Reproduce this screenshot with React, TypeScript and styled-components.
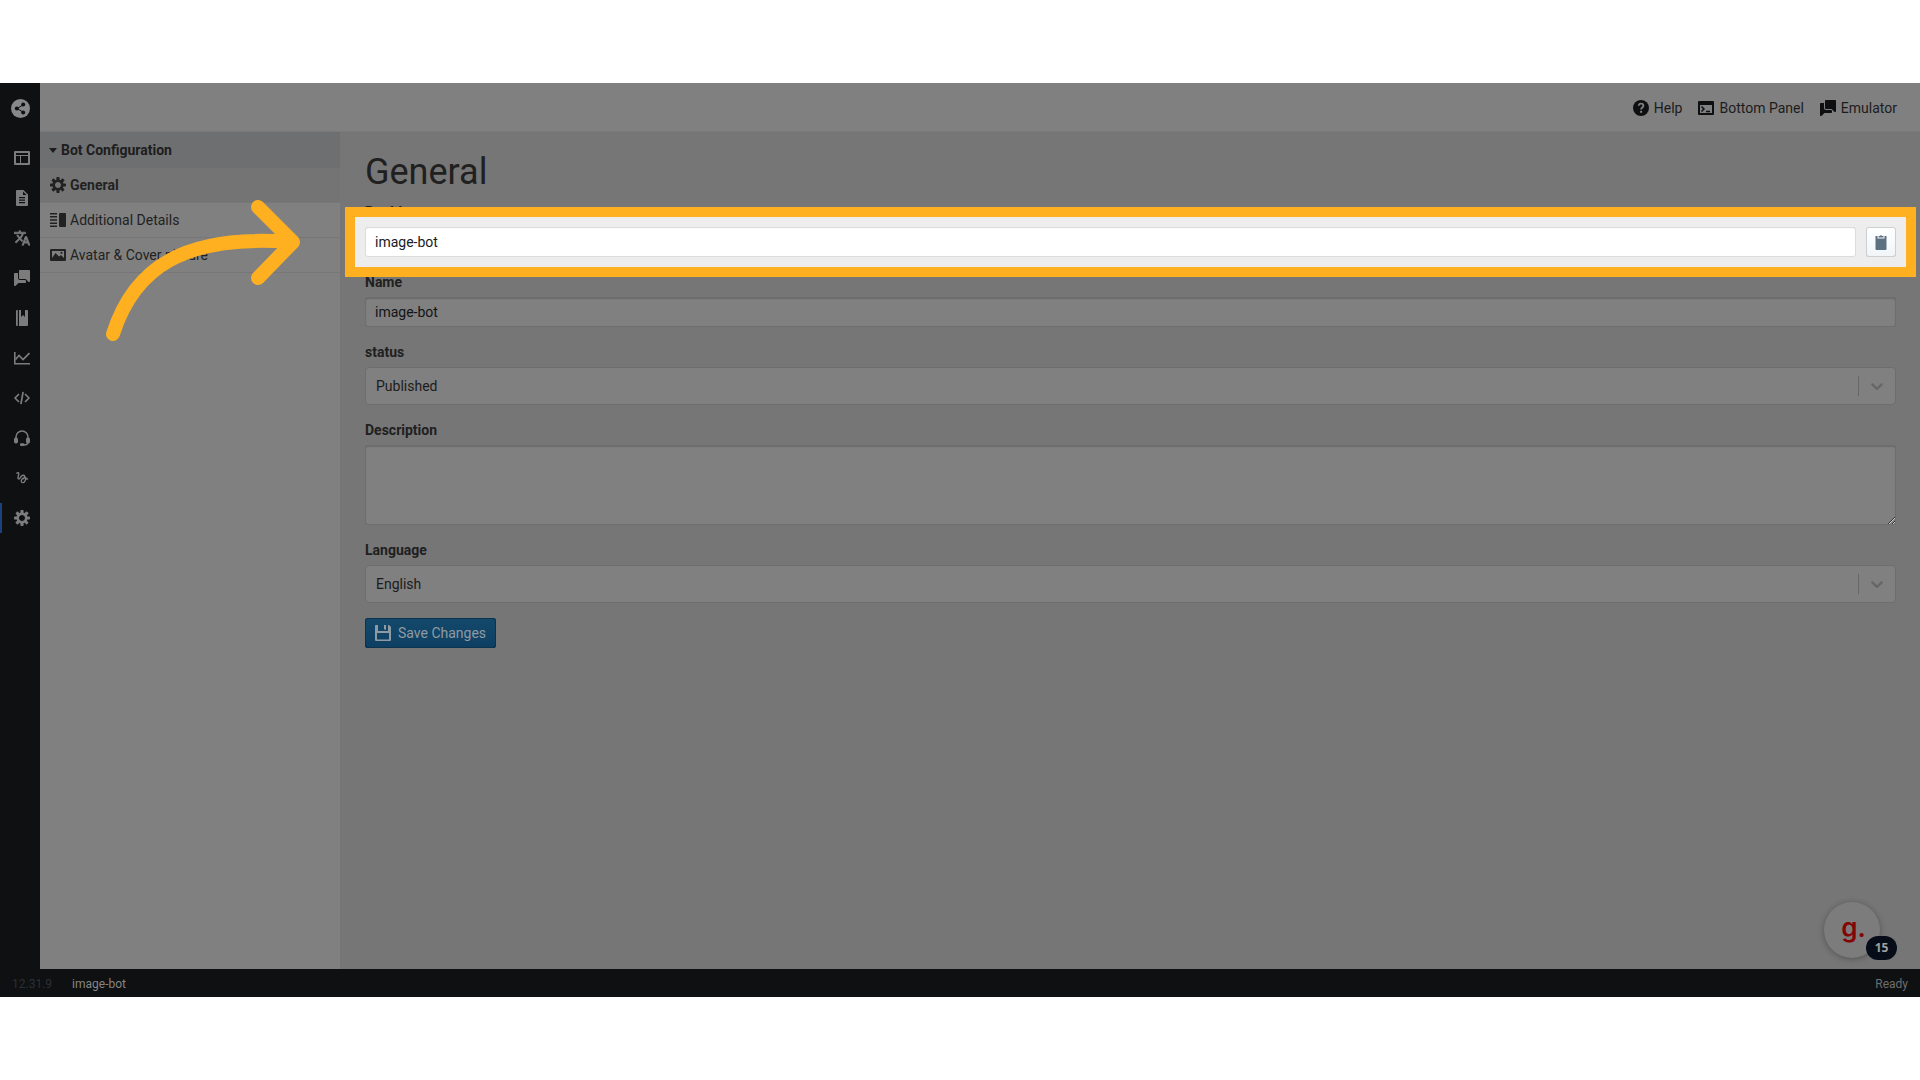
import React from "react";
import styled, { createGlobalStyle } from "styled-components";
import { MdTranslate } from "react-icons/md";

const GlobalStyle = createGlobalStyle`
  *, *::before, *::after { box-sizing: border-box; }
  body {
    margin: 0;
    background: #ffffff;
    color: #202020;
    font: 14px/20px Roboto, "Liberation Sans", sans-serif;
  }
  button, input, select, textarea { font: inherit; margin: 0; }
`;

const Page = styled.div`
  height: 100vh;
  min-height: 700px;
  padding: 83px 0;
`;

const Shell = styled.div`
  position: relative;
  display: flex;
  flex-direction: column;
  height: 100%;
  background: #767676;
`;

const Body = styled.div`
  display: flex;
  flex: 1;
  min-height: 0;
`;

const Rail = styled.nav`
  display: flex;
  flex-direction: column;
  flex: none;
  width: 40px;
  background: #0e1012;
`;

const Logo = styled.a`
  display: flex;
  align-items: center;
  justify-content: center;
  height: 55px;
  padding-bottom: 4px;
  color: #888888;
`;

const RailLink = styled.a<{ $active?: boolean }>`
  display: flex;
  align-items: center;
  height: 40px;
  padding-left: 14px;
  color: #7c7c7c;
  background: ${(p) => (p.$active ? "linear-gradient(#1b417e, #1b417e) left center / 2px 30px no-repeat" : "none")};
`;

const Workspace = styled.div`
  display: flex;
  flex: 1;
  flex-direction: column;
  min-width: 0;
`;

const TopBar = styled.header`
  display: flex;
  align-items: center;
  justify-content: flex-end;
  gap: 16px;
  flex: none;
  height: 49px;
  padding: 2px 23px 0 20px;
  background: #808080;
  border-bottom: 1px solid #7a7a7a;
`;

const TopButton = styled.button`
  display: flex;
  align-items: center;
  gap: 5px;
  padding: 0;
  border: 0;
  background: none;
  color: #1c1c1c;

  svg { color: #0d0f11; }
`;

const Columns = styled.div`
  display: flex;
  flex: 1;
  min-height: 0;
`;

const SidePanel = styled.aside`
  flex: none;
  width: 300px;
  background: #808080;
`;

const SectionToggle = styled.button`
  display: flex;
  align-items: center;
  gap: 4px;
  width: 100%;
  height: 36px;
  padding: 0 9px;
  border: 0;
  background: #6e6f71;
  color: #1d1d1d;
  font-weight: 700;
`;

const PanelLink = styled.a<{ $active?: boolean }>`
  display: flex;
  align-items: center;
  gap: 4px;
  height: 35px;
  padding: 0 10px;
  border-bottom: 1px solid #777777;
  background: ${(p) => (p.$active ? "#747474" : "transparent")};
  color: #222222;
  font-weight: ${(p) => (p.$active ? 700 : 400)};
  text-decoration: none;
`;

const Main = styled.main`
  flex: 1;
  min-width: 0;
  padding: 20px 24px 20px 25px;
`;

const Title = styled.h1`
  margin: 0 0 10px;
  font-size: 36px;
  line-height: 40px;
  font-weight: 400;
`;

const Group = styled.div`
  display: flex;
  flex-direction: column;
  gap: 5px;
  margin-bottom: 15px;
`;

const Label = styled.label`
  color: #202020;
  font-weight: 700;
`;

const TextInput = styled.input<{ $lit?: boolean }>`
  flex: 1;
  min-width: 0;
  height: 30px;
  min-height: 30px;
  padding: 0 10px;
  border: 0;
  border-radius: 3px;
  outline: 0;
  background: ${(p) => (p.$lit ? "#ffffff" : "#808080")};
  color: ${(p) => (p.$lit ? "#182026" : "#101418")};
  box-shadow: ${(p) =>
    p.$lit
      ? "inset 0 0 0 1px #dcdcdc, inset 0 1px 1px #d8d8d8"
      : "inset 0 0 0 1px #6e6e6e, inset 0 1px 1px 1px #6a6a6a"};
`;

const Spotlight = styled.div`
  position: relative;
  z-index: 1;
  display: flex;
  gap: 10px;

  &::before {
    content: "";
    position: absolute;
    inset: -20px;
    z-index: -1;
    border: 10px solid #ffb021;
    background: #ededed;
  }
`;

const CopyButton = styled.button`
  display: flex;
  align-items: center;
  justify-content: center;
  width: 30px;
  height: 30px;
  padding: 0;
  border: 0;
  border-radius: 3px;
  background: linear-gradient(#ffffff, #f1f5f8);
  box-shadow: inset 0 0 0 1px #cdd0d2, inset 0 -1px 0 #c4c8cb;
  color: #5c7080;
`;

const TextArea = styled.textarea`
  display: block;
  width: 100%;
  height: 80px;
  padding: 10px;
  border: 0;
  border-radius: 3px;
  outline: 0;
  resize: vertical;
  background: #808080;
  color: #101418;
  box-shadow: inset 0 0 0 1px #6e6e6e, inset 0 1px 1px 1px #6a6a6a;
`;

const SelectBox = styled.div`
  position: relative;
`;

const Select = styled.select`
  display: block;
  appearance: none;
  width: 100%;
  height: 38px;
  padding: 0 50px 0 10px;
  border: 1px solid #6d6d6d;
  border-radius: 4px;
  outline: 0;
  background: #808080;
  color: #1c1c1c;
`;

const Indicator = styled.span`
  position: absolute;
  top: 9px;
  right: 1px;
  display: flex;
  align-items: center;
  justify-content: center;
  width: 37px;
  height: 20px;
  border-left: 1px solid #666666;
  color: #666666;
  pointer-events: none;
`;

const SaveButton = styled.button`
  display: flex;
  align-items: center;
  gap: 7px;
  height: 30px;
  padding: 0 10px;
  border: 0;
  border-radius: 3px;
  background: linear-gradient(#14496c, #0e3f62);
  box-shadow: inset 0 0 0 1px #0c344f, inset 0 -1px 0 #0a2c44;
  color: #8f9ba3;
`;

const StatusBar = styled.footer`
  display: flex;
  align-items: center;
  gap: 20px;
  flex: none;
  height: 28px;
  padding: 1px 12px 0;
  background: #0e1012;
  color: #858585;
  font-size: 12px;
  line-height: 16px;
`;

const Version = styled.span`
  color: #2a3037;
`;

const Ready = styled.span`
  margin-left: auto;
  color: #6e6e6e;
`;

const Helper = styled.button`
  position: absolute;
  right: 40px;
  bottom: 39px;
  display: flex;
  align-items: center;
  justify-content: center;
  width: 56px;
  height: 56px;
  padding: 0 0 4px 3px;
  border: 0;
  border-radius: 50%;
  background: #7c7c7c;
  box-shadow: 0 1px 6px rgba(0, 0, 0, 0.3);
  color: #850507;
  font: 600 26px/32px Inter, sans-serif;
`;

const Count = styled.span`
  position: absolute;
  right: -17px;
  bottom: -2px;
  width: 31px;
  height: 24px;
  border-radius: 12px;
  background: #070d18;
  color: #a0a0a0;
  font: 700 12px/24px "Noto Sans", sans-serif;
  text-align: center;
`;

const Arrow = styled.svg`
  position: absolute;
  top: 110px;
  left: 100px;
  pointer-events: none;
`;

type IconProps = { children: React.ReactNode; size?: number };

const Icon = ({ children, size = 16 }: IconProps) => (
  <svg width={size} height={size} viewBox="0 0 16 16" fill="currentColor" aria-hidden="true">
    {children}
  </svg>
);

const ShareIcon = () => (
  <svg width="19" height="19" viewBox="0 0 19 19" aria-hidden="true">
    <circle cx="9.500" cy="9.500" r="9.500" fill="currentColor" />
    <path d="M12 6 6 9.500l6 3.500" fill="none" stroke="#0e1012" strokeWidth="1" />
    <g fill="#0e1012">
      <circle cx="12.200" cy="5.600" r="2" />
      <circle cx="5.800" cy="9.500" r="2" />
      <circle cx="12.200" cy="13.400" r="2" />
    </g>
  </svg>
);

const LayoutIcon = () => (
  <Icon>
    <path fillRule="evenodd" d="M1 1h14a1 1 0 0 1 1 1v12a1 1 0 0 1-1 1H1a1 1 0 0 1-1-1V2a1 1 0 0 1 1-1zm1 2v2h12V3zm0 3v7h4V6zm5 0v7h7V6z" />
  </Icon>
);

const DocumentIcon = () => (
  <Icon>
    <path fillRule="evenodd" d="M3 0h6.500L14 4.500V15a1 1 0 0 1-1 1H3a1 1 0 0 1-1-1V1a1 1 0 0 1 1-1zm6 1.500V5h3.500zM5 7v1.200h6V7zm0 2.500v1.200h6V9.500zM5 12v1.200h6V12z" />
  </Icon>
);

const ChatIcon = () => (
  <Icon>
    <path d="M6 10c-1.100 0-2-.9-2-2V3H1c-.55 0-1 .45-1 1v11c0 .55.45 1 1 1 .28 0 .53-.11.71-.29L4.410 13H11c.55 0 1-.45 1-1v-1.170l-.83-.83H6zm9-10H6c-.55 0-1 .45-1 1v7c0 .55.45 1 1 1h5.590l2.710 2.710c.17.18.42.29.7.29.55 0 1-.45 1-1V1c0-.55-.45-1-1-1z" />
  </Icon>
);

const NotebookIcon = () => (
  <Icon>
    <path d="M2 1a1 1 0 0 1 1-1h.8v16H3a1 1 0 0 1-1-1zM5 0h2v7l2-2 2 2V0h2a1 1 0 0 1 1 1v14a1 1 0 0 1-1 1H5z" />
  </Icon>
);

const ChartIcon = () => (
  <Icon>
    <path d="M0 2h1.600v11H16v1.500H0z" />
    <path d="m1.500 9.500 3.500-4 4 4L15.500 3" fill="none" stroke="currentColor" strokeWidth="1.700" />
  </Icon>
);

const CodeIcon = () => (
  <Icon>
    <path d="M4.500 4.500 1 8l3.500 3.500M11.500 4.500 15 8l-3.500 3.500M9 2.500l-2 11" fill="none" stroke="currentColor" strokeWidth="1.700" strokeLinecap="round" strokeLinejoin="round" />
  </Icon>
);

const HeadsetIcon = () => (
  <Icon>
    <path d="M2 8V7a6 6 0 0 1 12 0v1M14 12c0 2-1.500 3-4 3" fill="none" stroke="currentColor" strokeWidth="1.500" />
    <rect x="0" y="7.500" width="4" height="6" rx="1.800" />
    <rect x="12" y="7.500" width="4" height="6" rx="1.800" />
    <rect x="6" y="13.300" width="4.500" height="2.700" rx="1" />
  </Icon>
);

const ScribbleIcon = () => (
  <Icon>
    <path d="M2.900 3.200C3.600 2.300 5.200 2.400 4.800 4L4 7.300c-.4 1.700.9 1.900 1.800.9L7.300 6.300c1.100-1.300 2.900-1.300 3.400-.1.400 1.100-.6 2.100-1.700 2.600M10.500 7.800C9 8 7 9.800 7.300 11.500c.3 1.600 2.500 1.500 3.500-.1.900-1.400 1.200-3.200.8-4.400 .1 1.600.9 2.400 2 1.900" fill="none" stroke="currentColor" strokeWidth="1.400" strokeLinecap="round" />
  </Icon>
);

const CogIcon = () => (
  <Icon>
    <path d="M15.190 6.390h-1.850c-.11-.37-.27-.71-.45-1.040l1.360-1.360c.31-.31.31-.82 0-1.130l-1.130-1.130c-.31-.31-.82-.31-1.130 0l-1.360 1.360c-.33-.17-.67-.33-1.040-.44V.79c0-.44-.36-.8-.8-.8h-1.600c-.44 0-.8.36-.8.8v1.860c-.39.12-.75.28-1.100.47l-1.300-1.300c-.3-.3-.79-.3-1.090 0L1.820 2.910c-.3.3-.3.79 0 1.090l1.300 1.300c-.2.34-.36.7-.48 1.090H.79c-.44 0-.8.36-.8.8v1.600c0 .44.36.8.8.8h1.850c.11.37.27.71.45 1.040l-1.360 1.360c-.31.31-.31.82 0 1.130l1.130 1.130c.31.31.82.31 1.130 0l1.360-1.360c.33.18.67.33 1.040.44v1.860c0 .44.36.8.8.8h1.600c.44 0 .8-.36.8-.8v-1.860c.39-.12.75-.28 1.100-.47l1.300 1.300c.3.3.79.3 1.090 0l1.090-1.090c.3-.3.3-.79 0-1.090l-1.300-1.300c.19-.35.36-.71.48-1.100h1.850c.44 0 .8-.36.8-.8v-1.600a.816.816 0 0 0-.81-.79zm-7.200 4.600c-1.660 0-3-1.340-3-3s1.340-3 3-3 3 1.340 3 3-1.340 3-3 3z" />
  </Icon>
);

const HelpIcon = () => (
  <Icon>
    <circle cx="8" cy="8" r="8" />
    <path d="M5.700 5.800C5.800 4.300 6.700 3.700 8 3.700c1.400 0 2.400.7 2.400 2 0 1.800-2.300 1.900-2.300 3.900" fill="none" stroke="#808080" strokeWidth="1.800" />
    <rect x="7.100" y="10.800" width="2" height="2" fill="#808080" />
  </Icon>
);

const ConsoleIcon = () => (
  <Icon>
    <path fillRule="evenodd" d="M1 1h14a1 1 0 0 1 1 1v12a1 1 0 0 1-1 1H1a1 1 0 0 1-1-1V2a1 1 0 0 1 1-1zm1 4v8h12V5z" />
    <path d="m3.500 6.500 2.500 2.500-2.500 2.500M8 11.500h4" fill="none" stroke="currentColor" strokeWidth="1.500" />
  </Icon>
);

const DetailIcon = () => (
  <Icon>
    <path d="M0 1h7v1.500H0zM0 4h7v1.500H0zM0 7.200h7v1.500H0zM0 10.400h7v1.500H0zM0 13.500h7V15H0z" />
    <rect x="9" y="1" width="7" height="14" rx="1" />
  </Icon>
);

const MediaIcon = () => (
  <Icon>
    <path fillRule="evenodd" d="M1 2h14a1 1 0 0 1 1 1v10a1 1 0 0 1-1 1H1a1 1 0 0 1-1-1V3a1 1 0 0 1 1-1zm1 2v7l3.500-5L9 9.500 11 8l3 3V4z" />
    <circle cx="11.500" cy="5.800" r="1.100" />
  </Icon>
);

const ClipboardIcon = () => (
  <Icon>
    <path d="M10.500 3.500h-5V2h1.300a1.300 1.300 0 0 1 2.400 0h1.300z" />
    <path d="M2.500 2h2v2.500h7V2h2v13a1 1 0 0 1-1 1h-9a1 1 0 0 1-1-1z" />
  </Icon>
);

const FloppyIcon = () => (
  <Icon>
    <path fillRule="evenodd" d="M1 0h2v6h10V0h1l2 2v13a1 1 0 0 1-1 1H1a1 1 0 0 1-1-1V1a1 1 0 0 1 1-1zm1 8v6.500h12V8zM9 0h2v4.500H9z" />
  </Icon>
);

const Chevron = () => (
  <svg width="20" height="20" viewBox="0 0 20 20" fill="currentColor" aria-hidden="true">
    <path d="M4.516 7.548c.436-.446 1.043-.481 1.576 0L10 11.295l3.908-3.747c.533-.481 1.141-.446 1.574 0 .436.445.408 1.197 0 1.615-.406.418-4.695 4.502-4.695 4.502a1.095 1.095 0 0 1-1.576 0S4.924 9.581 4.516 9.163s-.436-1.170 0-1.615z" />
  </svg>
);

const Caret = () => (
  <svg width="8" height="5" viewBox="0 0 8 5" fill="currentColor" aria-hidden="true">
    <path d="M0 0h8L4 5z" />
  </svg>
);

const railItems = [
  { name: "Content layout", icon: <LayoutIcon /> },
  { name: "Documents", icon: <DocumentIcon /> },
  { name: "Translations", icon: <MdTranslate size={16} viewBox="1 1 22 22" strokeWidth={1} stroke="currentColor" /> },
  { name: "Conversations", icon: <ChatIcon /> },
  { name: "Library", icon: <NotebookIcon /> },
  { name: "Analytics", icon: <ChartIcon /> },
  { name: "Code editor", icon: <CodeIcon /> },
  { name: "Agents", icon: <HeadsetIcon /> },
  { name: "Misunderstood", icon: <ScribbleIcon /> },
  { name: "Configuration", icon: <CogIcon />, active: true },
];

const panelItems = [
  { name: "General", icon: <CogIcon />, active: true },
  { name: "Additional Details", icon: <DetailIcon /> },
  { name: "Avatar & Cover picture", icon: <MediaIcon /> },
];

const SelectField = ({ id, label, options }: { id: string; label: string; options: string[] }) => (
  <Group>
    <Label htmlFor={id}>{label}</Label>
    <SelectBox>
      <Select id={id}>
        {options.map((option) => (
          <option key={option}>{option}</option>
        ))}
      </Select>
      <Indicator>
        <Chevron />
      </Indicator>
    </SelectBox>
  </Group>
);

export default function App() {
  return (
    <Page>
      <GlobalStyle />
      <Shell>
        <Body>
          <Rail>
            <Logo href="#home" aria-label="Home">
              <ShareIcon />
            </Logo>
            {railItems.map((item) => (
              <RailLink key={item.name} href="#" aria-label={item.name} $active={item.active}>
                {item.icon}
              </RailLink>
            ))}
          </Rail>
          <Workspace>
            <TopBar>
              <TopButton type="button"><HelpIcon />Help</TopButton>
              <TopButton type="button"><ConsoleIcon />Bottom Panel</TopButton>
              <TopButton type="button"><ChatIcon />Emulator</TopButton>
            </TopBar>
            <Columns>
              <SidePanel>
                <SectionToggle type="button"><Caret />Bot Configuration</SectionToggle>
                {panelItems.map((item) => (
                  <PanelLink key={item.name} href="#" $active={item.active}>
                    {item.icon}
                    {item.name}
                  </PanelLink>
                ))}
              </SidePanel>
              <Main>
                <Title>General</Title>
                <Group>
                  <Label htmlFor="bot-id">Bot Id</Label>
                  <Spotlight>
                    <TextInput id="bot-id" defaultValue="image-bot" readOnly $lit />
                    <CopyButton type="button" aria-label="Copy"><ClipboardIcon /></CopyButton>
                  </Spotlight>
                </Group>
                <Group>
                  <Label htmlFor="name">Name</Label>
                  <TextInput id="name" defaultValue="image-bot" />
                </Group>
                <SelectField id="status" label="status" options={["Published"]} />
                <Group>
                  <Label htmlFor="description">Description</Label>
                  <TextArea id="description" />
                </Group>
                <SelectField id="language" label="Language" options={["English"]} />
                <SaveButton type="button"><FloppyIcon />Save Changes</SaveButton>
              </Main>
            </Columns>
          </Workspace>
        </Body>
        <StatusBar>
          <Version>12.31.9</Version>
          <span>image-bot</span>
          <Ready>Ready</Ready>
        </StatusBar>
        <Helper type="button">
          g.
          <Count>15</Count>
        </Helper>
        <Arrow width="210" height="160" viewBox="0 0 210 160" fill="none" stroke="#ffb021" strokeWidth="14" strokeLinecap="round" strokeLinejoin="round" aria-hidden="true">
          <path d="M13 141C34 75 84 41 190 49M158 14l35 35-35 36" />
        </Arrow>
      </Shell>
    </Page>
  );
}
